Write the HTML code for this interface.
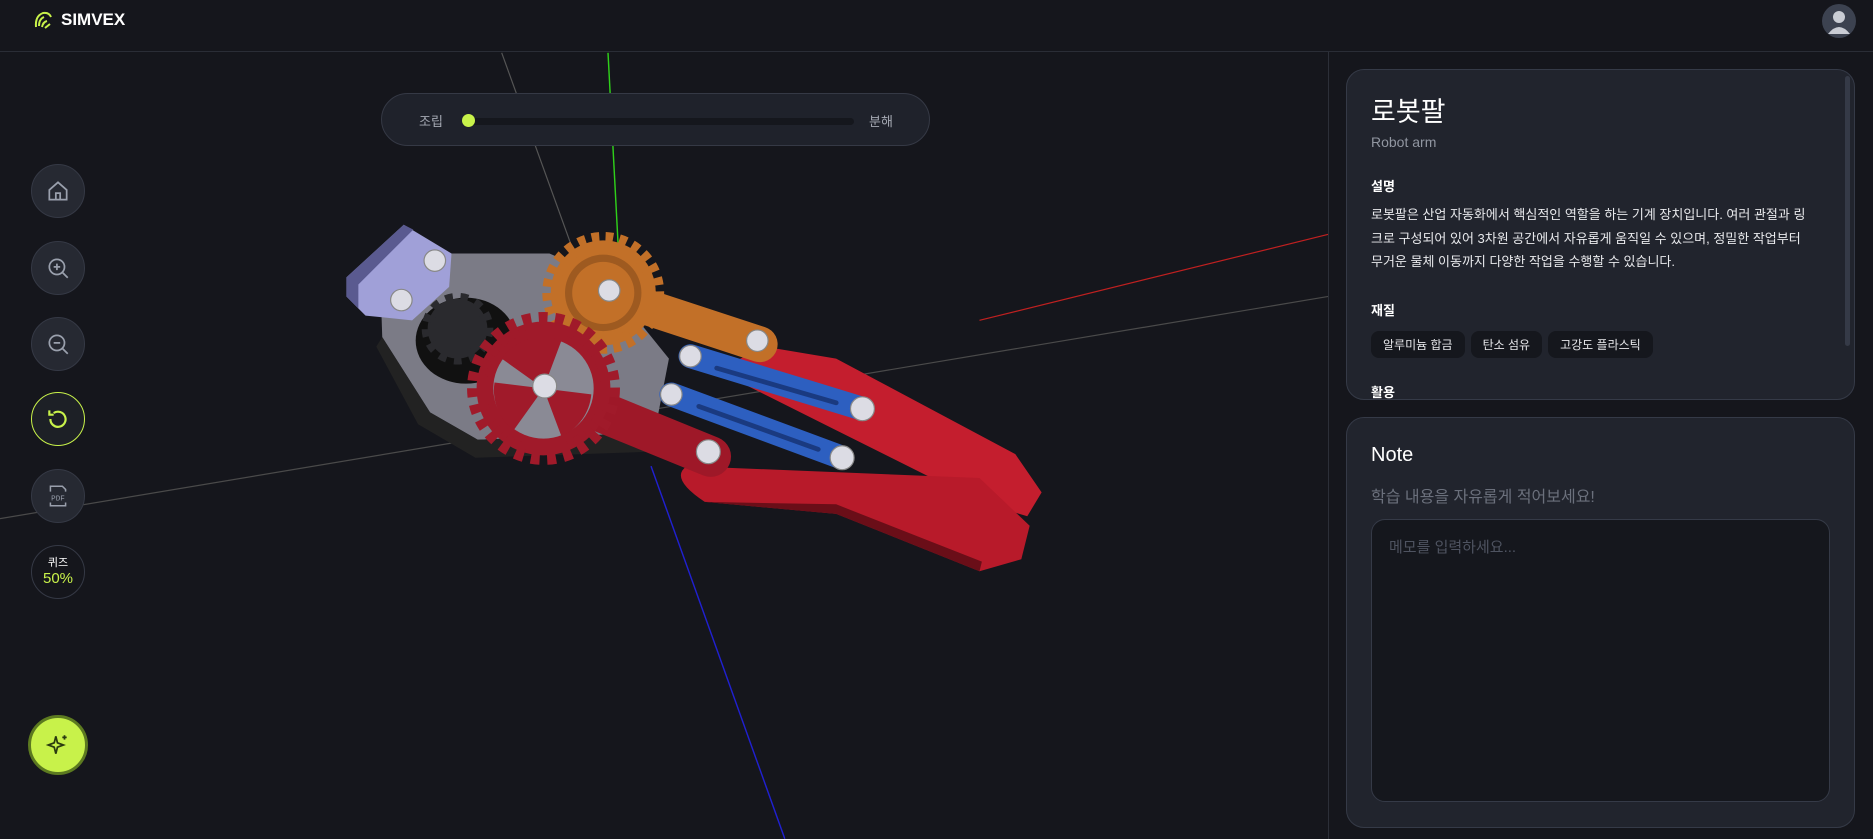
<!DOCTYPE html>
<html><head><meta charset="utf-8"><style>
*{box-sizing:border-box;margin:0;padding:0}
body{width:1873px;height:839px;overflow:hidden;background:#15161c;font-family:"Liberation Sans","Noto Sans CJK KR",sans-serif;color:#fff;position:relative}
.hdr{position:absolute;left:0;top:0;width:1873px;height:52px;border-bottom:1px solid #2a2d36;background:#15161c}
.logo{position:absolute;left:33px;top:10px;display:flex;align-items:center;gap:8px;font-weight:bold;font-size:17px}
.av{position:absolute;left:1822px;top:4px;width:34px;height:34px;border-radius:50%;background:#3c4250;overflow:hidden}
.scene{position:absolute;left:0;top:0}
.pill{position:absolute;left:381px;top:93px;width:549px;height:53px;border-radius:27px;background:#1f222b;border:1px solid #353945}
.pill .l{position:absolute;left:37px;top:17px;font-size:13px;color:#a5a9b3}
.pill .r{position:absolute;left:487px;top:17px;font-size:13px;color:#a5a9b3}
.track{position:absolute;left:82px;top:24px;width:390px;height:7px;border-radius:4px;background:#15171d}
.dot{position:absolute;left:80px;top:20px;width:13px;height:13px;border-radius:50%;background:#c8f24a}
.btn{position:absolute;left:31px;width:54px;height:54px;border-radius:50%;background:#262932;border:1px solid #353945;display:flex;align-items:center;justify-content:center}
.vdiv{position:absolute;left:1328px;top:52px;width:1px;height:787px;background:#2c2f38}
.card{position:absolute;left:1346px;width:509px;background:#21242d;border:1px solid #353a47;border-radius:18px;overflow:hidden}
.chip{display:inline-block;background:#15171d;border-radius:8px;font-size:12px;padding:5px 12px;margin-right:6px;color:#e6e7ea}
.h3{font-size:13px;font-weight:bold}
</style></head><body>
<svg class="scene" width="1873" height="839" viewBox="0 0 1568 702">
<line x1="420" y1="44" x2="480" y2="210" stroke="#555" stroke-width="1"/>
<line x1="0" y1="434" x2="1112" y2="248" stroke="#4a4a4a" stroke-width="1"/>
<line x1="820" y1="268" x2="1112" y2="196" stroke="#c02020" stroke-width="1"/>
<line x1="509" y1="44" x2="523" y2="310" stroke="#2fd01a" stroke-width="1.2"/>
<line x1="545" y1="390" x2="657" y2="702" stroke="#2020d0" stroke-width="1.2"/>
<polygon points="318,222 350,212 460,212 505,232 560,300 548,362 400,368 360,345 320,282" fill="#7b7b86"/>
<polygon points="320,282 360,345 400,368 548,362 545,378 398,383 350,355 315,290" fill="#222"/>
<ellipse cx="390" cy="285" rx="42" ry="36" fill="#111"/>
<circle cx="383" cy="275" r="25" fill="#2a2a2e" stroke="#2a2a2e" stroke-width="10" stroke-dasharray="6 6"/>
<polygon points="290,232 338,188 378,212 376,240 345,268 306,264 290,248" fill="#a0a0d8"/>
<polygon points="290,232 338,188 346,192 300,238 300,258 290,248" fill="#5a5a90"/>
<path d="M640,290 L700,300 L850,380 L872,412 L860,432 L820,420 L700,360 L600,310Z" fill="#c41e2e"/>
<path d="M575,390 L820,400 L862,440 L855,468 L820,478 L700,430 L590,420 Q560,400 575,390Z" fill="#b81a2a"/>
<path d="M590,420 L700,430 L820,478 L822,470 L700,422Z" fill="#6a0e18"/>
<line x1="505" y1="245" x2="636" y2="288" stroke="#c27028" stroke-width="30" stroke-linecap="round"/>
<circle cx="505" cy="245" r="44" fill="#c27028" stroke="#c27028" stroke-width="14" stroke-dasharray="6 5"/>
<circle cx="505" cy="245" r="32" fill="#9e5a20"/>
<circle cx="505" cy="245" r="26" fill="#c27028"/>
<line x1="455" y1="325" x2="595" y2="382" stroke="#9e1828" stroke-width="34" stroke-linecap="round"/>
<circle cx="455" cy="325" r="56" fill="#a01a2a" stroke="#a01a2a" stroke-width="16" stroke-dasharray="7 6"/>
<circle cx="455" cy="325" r="42" fill="#8a8a95"/>
<path d="M455,325 L420,300 A42,42 0 0 1 470,285Z M455,325 L495,330 A42,42 0 0 1 470,365Z M455,325 L430,360 A42,42 0 0 1 414,320Z" fill="#a01a2a"/>
<line x1="578" y1="298" x2="722" y2="342" stroke="#2d5fc0" stroke-width="20" stroke-linecap="round"/>
<line x1="562" y1="330" x2="705" y2="383" stroke="#2d5fc0" stroke-width="20" stroke-linecap="round"/>
<line x1="600" y1="308" x2="700" y2="337" stroke="#1a3a80" stroke-width="4" stroke-linecap="round"/>
<line x1="585" y1="340" x2="685" y2="376" stroke="#1a3a80" stroke-width="4" stroke-linecap="round"/>
<g fill="#dcdce4" stroke="#888" stroke-width="1">
<circle cx="364" cy="218" r="9"/><circle cx="336" cy="251" r="9"/><circle cx="510" cy="243" r="9"/><circle cx="634" cy="285" r="9"/><circle cx="456" cy="323" r="10"/><circle cx="578" cy="298" r="9"/><circle cx="722" cy="342" r="10"/><circle cx="562" cy="330" r="9"/><circle cx="705" cy="383" r="10"/><circle cx="593" cy="378" r="10"/>
</g>
</svg>
<div class="hdr">
<div class="logo"><svg width="20" height="20" viewBox="0 0 20 20" fill="none" stroke="#c8f24a" stroke-width="2"><path d="M3 17 Q2 6 10 3 Q16 2 18 7 M6 16 Q6 9 11 7 M9 17 Q10 12 14 11 M12 18 L17 14"/></svg>SIMVEX</div>
<div class="av"><svg width="34" height="34" viewBox="0 0 34 34"><circle cx="17" cy="13" r="6" fill="#c9ccd4"/><path d="M6 30 Q17 16 28 30Z" fill="#c9ccd4"/></svg></div>
</div>
<div class="pill"><span class="l">조립</span><div class="track"></div><div class="dot"></div><span class="r">분해</span></div>
<div class="btn" style="top:164px"><svg width="26" height="26" viewBox="0 0 24 24" fill="none" stroke="#9aa0ad" stroke-width="1.6"><path d="M4 11 L12 4 L20 11 V20 H4Z M10 20 V14 H14 V20"/></svg></div>
<div class="btn" style="top:241px"><svg width="26" height="26" viewBox="0 0 24 24" fill="none" stroke="#9aa0ad" stroke-width="1.6"><circle cx="11" cy="11" r="7"/><path d="M16 16 L21 21 M8 11 H14 M11 8 V14"/></svg></div>
<div class="btn" style="top:317px"><svg width="26" height="26" viewBox="0 0 24 24" fill="none" stroke="#9aa0ad" stroke-width="1.6"><circle cx="11" cy="11" r="7"/><path d="M16 16 L21 21 M8 11 H14"/></svg></div>
<div class="btn" style="top:392px;background:#1d2026;border:1.5px solid #c8f24a"><svg width="26" height="26" viewBox="0 0 24 24" fill="none" stroke="#c8f24a" stroke-width="2"><path d="M5 12 A7 7 0 1 0 8 6.5 M4 4 V8 H8"/></svg></div>
<div class="btn" style="top:469px"><svg width="26" height="26" viewBox="0 0 24 24" fill="none" stroke="#9aa0ad" stroke-width="1.4"><path d="M5 8 V3 H16 L19 6 V8 M5 18 V21 H19 V18"/><text x="12" y="16" font-size="7" text-anchor="middle" fill="#9aa0ad" stroke="none" font-family="Liberation Mono">PDF</text></svg></div>
<div class="btn" style="top:545px;background:#15161c;flex-direction:column;line-height:1.15"><span style="font-size:11px">퀴즈</span><span style="font-size:15px;color:#c8f24a">50%</span></div>
<div class="btn" style="left:28px;top:715px;width:60px;height:60px;background:#c8f24a;border:3px solid #5c7a20"><svg width="26" height="26" viewBox="0 0 24 24" fill="none" stroke="#2a3a10" stroke-width="1.6"><path d="M10 4 L11.5 10 L17 12 L11.5 14 L10 20 L8.5 14 L3 12 L8.5 10Z M18 3 V7 M16 5 H20"/></svg></div>
<div class="vdiv"></div>
<div class="card" style="top:69px;height:331px;padding:24px 24px">
<div style="position:absolute;right:4px;top:6px;width:5px;height:270px;border-radius:3px;background:#353a47"></div>
<div style="font-size:27px;line-height:36px">로봇팔</div>
<div style="font-size:14px;color:#9196a1;margin-top:4px">Robot arm</div>
<div class="h3" style="margin-top:26px">설명</div>
<div style="font-size:13px;line-height:23.5px;margin-top:8px;color:#e8e9ec;width:440px">로봇팔은 산업 자동화에서 핵심적인 역할을 하는 기계 장치입니다. 여러 관절과 링크로 구성되어 있어 3차원 공간에서 자유롭게 움직일 수 있으며, 정밀한 작업부터 무거운 물체 이동까지 다양한 작업을 수행할 수 있습니다.</div>
<div class="h3" style="margin-top:26px">재질</div>
<div style="margin-top:12px"><span class="chip">알루미늄 합금</span><span class="chip">탄소 섬유</span><span class="chip">고강도 플라스틱</span></div>
<div class="h3" style="margin-top:24px">활용</div>
</div>
<div class="card" style="top:417px;height:411px;padding:26px 24px">
<div style="font-size:20px">Note</div>
<div style="font-size:16px;color:#6b707c;margin-top:16px">학습 내용을 자유롭게 적어보세요!</div>
<div style="position:absolute;left:24px;top:101px;width:459px;height:283px;border:1px solid #353a47;border-radius:14px;background:#15171d;padding:16px 17px;font-size:15px;color:#4e5360">메모를 입력하세요...</div>
</div>
</body></html>
